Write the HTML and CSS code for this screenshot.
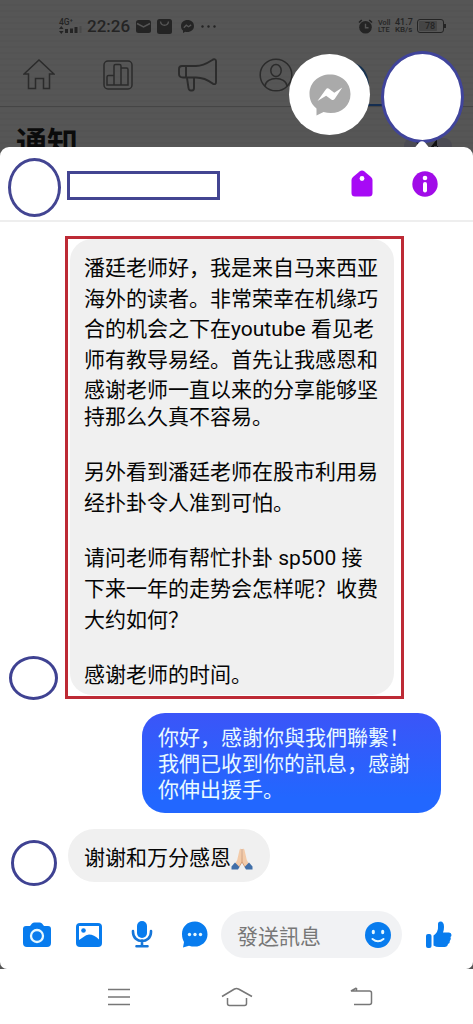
FILE: index.html
```html
<!DOCTYPE html>
<html lang="zh-Hans">
<head>
<meta charset="utf-8">
<title>訊息</title>
<link rel="stylesheet" href="styles.css">
</head>
<body>
<div class="phone">
  <div class="backdrop">
    <div class="status">
      <div class="signal"><span class="net">4G⁺</span>
        <svg width="24" height="8" viewBox="0 0 24 8"><path d="M0 3l2.300-3 2.300 3zM0 5l2.300 3 2.300-3z"/><path d="M6 3h3v4H6zM11 2.500h3V7h-3zM15.500 1h3v6h-3z"/><path d="M20.500 0h2v7h-2z" opacity=".25"/></svg>
      </div>
      <span class="clock">22:26</span>
      <svg class="mail" width="15" height="13" viewBox="0 0 15 13"><rect width="15" height="13" rx="2.500"/><path d="M1 3.500l6.500 3.500L14 3.500" fill="none" stroke="#555" stroke-width="1.500"/></svg>
      <svg class="bag" width="15" height="15" viewBox="0 0 15 15"><rect width="15" height="15" rx="2.500"/><path d="M3.500 2.500c.5 5 7.500 5 8 0" fill="none" stroke="#555" stroke-width="1.400"/></svg>
      <svg class="chat" width="13" height="13" viewBox="0 0 13 13"><path d="M6.500 0C2.700 0 0 2.500 0 6c0 2 .8 3.500 2 4.500V13l2.300-1.200c4.800 1 8.700-1.700 8.700-5.800C13 2.500 10.300 0 6.500 0z"/><path d="M2.800 7.800l2.500-2.600 2.200 1.600 2.700-1.900" fill="none" stroke="#555" stroke-width="1.300"/></svg>
      <svg class="more" width="15" height="3" viewBox="0 0 15 3"><circle cx="1.500" cy="1.500" r="1.200"/><circle cx="7.500" cy="1.500" r="1.200"/><circle cx="13.500" cy="1.500" r="1.200"/></svg>
      <svg class="alarm" width="15" height="15" viewBox="0 0 15 15"><circle cx="7.500" cy="8.300" r="6.300"/><path d="M1 3.500L3.800 1M14 3.500L11.200 1" stroke="#222" stroke-width="1.600"/><path d="M7.500 4.800v4h3" fill="none" stroke="#555" stroke-width="1.400"/></svg>
      <div class="stack volte"><span>Voll</span><span>LTE</span></div>
      <div class="stack speed"><span class="rate">41.7</span><span>KB/s</span></div>
      <div class="battery"><span>78</span></div>
    </div>
    <div class="tabs">
      <svg class="t-home" width="32" height="31" viewBox="0 0 32 31"><path d="M1 15L16 1l15 14h-4.500v14.500h-6V19.500h-8v10h-7V15z"/></svg>
      <svg class="t-chart" width="30" height="30" viewBox="0 0 30 30"><rect x="1" y="1" width="28" height="28" rx="4"/><path d="M4 25V17q0-1.500 1.500-1.500H11V25zM11 25V6q0-1.500 1.500-1.500h4Q18 4.500 18 6v19zM18 8h5.500Q25 8 25 9.500V25h-7"/></svg>
      <svg class="t-horn" width="39" height="34" viewBox="0 0 39 34"><g stroke-width="1.900"><path d="M8 8h10C26 8 31 4 35 1.500q3-.8 3 1.500v21q0 3-3 1.800C30 22 25 19.500 18 19.500H5Q1 19.500 1 16v-5q0-3 3-3zM8 8v11.500"/><path d="M9 20l1.500 10q.3 2.500 2.500 2.500h1q2 0 2-2.500V20"/></g></svg>
      <svg class="t-user" width="34" height="34" viewBox="0 0 34 34"><circle cx="17" cy="17" r="15.800"/><ellipse cx="17" cy="12.500" rx="5.200" ry="6"/><path d="M6 28c1-10 21-10 22 0"/></svg>
      <svg class="t-bell" width="18" height="24" viewBox="0 0 18 24"><path d="M0 0c10 1 16 8 17 22l-4 1C10 13 7 5 0 0z" fill="#173250" stroke="none"/></svg>
    </div>
    <div class="page-title"><h1>通知</h1>
      <svg class="search" width="48" height="16" viewBox="0 0 48 16"><rect width="48" height="16" rx="8" fill="#4b4b53"/><path d="M12 4h8l-3 6zM33 1l-7 9h7zM30 8h4l1 6h-5z" fill="#111"/></svg>
    </div>
    <div class="active-line"></div>
  </div>

  <div class="heads">
    <div class="messenger"><svg width="42" height="42" viewBox="0 0 42 42"><path d="M21 .5C9.500.5.500 8.500.500 20c0 6 2.500 11 7 14.500V41.500l7-3.500C29 42 41.500 34 41.500 20 41.500 8.500 32.500.5 21 .5z" fill="#aaa"/><path d="M8.500 27l8.300-11.500q1.500-2 3.500-.5l5 3.800 8-5.200-7.500 11.200q-1.500 2-3.500.7l-5.200-3.700z" fill="#fff"/></svg></div>
    <div class="person"></div>
    <svg class="pointer" width="20" height="8" viewBox="0 0 20 8"><path d="M1 8Q3 7 5 4l2-2.500q3-2.500 6 0L15 4q2 3 4 4z" fill="#fff"/></svg>
  </div>

  <main class="sheet">
    <header class="contact">
      <div class="face"></div>
      <div class="name"></div>
      <svg class="tag" width="22" height="27" viewBox="0 0 22 27"><path d="M8.500 1.400q2.500-2 5 0L20 7q1.500 1.500 1.500 3v13q0 3.500-3.500 3.500H4Q.500 26.500.500 23V10Q.500 8.500 2 7z" fill="#a70af5"/><circle cx="11" cy="8.500" r="2.400" fill="#fff"/></svg>
      <svg class="info" width="26" height="26" viewBox="0 0 26 26"><circle cx="13" cy="13" r="12.700" fill="#a10ce8"/><circle cx="13" cy="7" r="2.300" fill="#fff"/><path d="M13 13v6.500" stroke="#fff" stroke-width="4" stroke-linecap="round"/></svg>
    </header>

    <section class="thread">
      <div class="row first">
        <div class="ring wide"></div>
        <div class="frame">
          <div class="bubble long">
            <p><span>潘廷老师好，我是来自马来西亚</span><span>海外的读者。非常荣幸在机缘巧</span><span>合的机会之下在youtube 看见老</span><span>师有教导易经。首先让我感恩和</span><span>感谢老师一直以来的分享能够坚</span><span class="tight">持那么久真不容易。</span></p>
            <p><span>另外看到潘廷老师在股市利用易</span><span>经扑卦令人准到可怕。</span></p>
            <p><span>请问老师有帮忙扑卦 sp500 接</span><span>下来一年的走势会怎样呢？收费</span><span>大约如何？</span></p>
            <p><span>感谢老师的时间。</span></p>
          </div>
        </div>
      </div>
      <div class="row reply">
        <div class="bubble mine"><span>你好，感謝你與我們聯繫！</span><span>我們已收到你的訊息，感謝</span><span>你伸出援手。</span></div>
      </div>
      <div class="row last">
        <div class="ring"></div>
        <div class="bubble short"><span>谢谢和万分感恩</span><svg width="22" height="22" viewBox="0 0 22 22"><path d="M10.500 1q-1.500-.8-2 1L6.200 12 4 16l4 3 3-5zM11.500 1q1.500-.8 2 1l2.300 10 2.200 4-4 3-3-5z" fill="#f3cba9"/><path d="M11 1v13M8 19l3-5 3 5" fill="none" stroke="#c98f68" stroke-width=".8"/><path d="M4 14.500L8.500 19 7 21.500H.500v-3zM18 14.500L13.500 19l1.500 2.500h6.500v-3z" fill="#416fa8"/></svg></div>
      </div>
    </section>

    <footer class="composer">
      <svg class="c-cam" width="30" height="26" viewBox="0 0 30 26"><path d="M4 4h4l2-2.500Q11 .5 12.500.5h5Q19 .5 20 1.500L22 4h4q3 0 3 3v14q0 4-4 4H5q-4 0-4-4V7q0-3 3-3z"/><circle cx="15" cy="14" r="6" fill="none" stroke="#e5f8ff" stroke-width="2.300"/></svg>
      <svg class="c-pic" width="28" height="26" viewBox="0 0 28 26"><rect x="1" y="1" width="26" height="24" rx="4"/><path d="M4 4h20v13.500Q19 12.500 14 12.500q-3 0-5.500 2.500L4 18z" fill="#fff"/><circle cx="8.500" cy="8.500" r="2.300"/></svg>
      <svg class="c-mic" width="22" height="27" viewBox="0 0 22 27"><rect x="6" y="0" width="10" height="17" rx="5"/><path d="M2 10v1c0 12 18 12 18 0v-1M11 19.500V25M5.500 25.200h11" fill="none" stroke="#1676d8" stroke-width="2.600" stroke-linecap="round"/></svg>
      <svg class="c-chat" width="27" height="27" viewBox="0 0 27 27"><path d="M14 .5C6 .5 1 6 1 13c0 4 1 6 2 8l-1 5.500 6-1.800C18 28 26.500 22 26.500 13.500 26.500 6 21 .5 14 .5z"/><g fill="#e5f8ff"><circle cx="8.500" cy="13.500" r="1.700"/><circle cx="14" cy="13.500" r="1.700"/><circle cx="19.500" cy="13.500" r="1.700"/></g></svg>
      <div class="field"><span>發送訊息</span><svg width="26" height="26" viewBox="0 0 26 26"><circle cx="13" cy="13" r="13"/><ellipse cx="8.300" cy="10" rx="1.600" ry="2.300" fill="#e5f8ff"/><ellipse cx="17.700" cy="10" rx="1.600" ry="2.300" fill="#e5f8ff"/><path d="M7.500 17q5.500 4.500 11 0" fill="none" stroke="#e5f8ff" stroke-width="2" stroke-linecap="round"/></svg></div>
      <svg class="c-like" width="27" height="28" viewBox="0 0 27 28"><rect x="1" y="13" width="5.500" height="14" rx="2"/><path d="M8.500 14.500q5-3.500 4.500-9V3q0-2.500 2.500-2.500 3.500 0 3.500 5.500 0 3-1 5.500h6q2.500.3 2.500 2.500 0 1.500-1 2 1 2-.7 4 .3 2.500-1.800 3-.5 3-3.500 3H14q-3 0-5.500-1.500z"/></svg>
    </footer>
  </main>

  <nav class="sysnav">
    <svg class="n-menu" width="22" height="18" viewBox="0 0 22 18"><path d="M0 1.500h22M0 9h22M0 16.500h22"/></svg>
    <svg class="n-home" width="32" height="20" viewBox="0 0 32 20"><path d="M1 9.500L13.500 2q2-1.200 4 0L31 9.500M6.500 11v5.500Q6.500 18.500 8.500 18.500h15q2 0 2-2V11"/></svg>
    <svg class="n-back" width="23" height="20" viewBox="0 0 23 20"><path d="M6.500 1L1 4h18.500q2 0 2 2v9.500q0 2-2 2H4M6.500 1v3"/></svg>
  </nav>
</div>
</body>
</html>
```
FILE: styles.css
```css
* { box-sizing: border-box; }
body { margin: 0; background: #fff; font-family: Roboto, "Noto Sans CJK SC", sans-serif; }
svg { display: block; flex: none; }
.phone { position: relative; width: 473px; height: 1024px; display: flex; flex-direction: column; overflow: hidden; background: #555; }

.backdrop { height: 147px; flex: none; position: relative; overflow: hidden; background: repeating-linear-gradient(#565656 0 4px, #545454 4px 6px); }
.status { display: flex; align-items: center; height: 52px; padding-left: 59px; color: #242424; }
.status svg { fill: #242424; }
.signal { width: 24px; font-size: 8.500px; line-height: 8px; font-weight: 500; }
.net { display: block; }
.clock { margin-left: 4px; width: 44px; font-size: 17px; font-weight: 500; }
.mail { margin-left: 5px; }
.bag { margin-left: 6px; }
.chat { margin-left: 9px; }
.more { margin-left: 7px; }
.alarm { margin-left: 142px; }
.stack { display: flex; flex-direction: column; font-weight: 500; line-height: 7.500px; white-space: nowrap; }
.volte { width: 13px; margin-left: 5px; font-size: 7.300px; }
.speed { width: 19px; margin-left: 4px; font-size: 8px; }
.rate { font-size: 9px; }
.battery { width: 27px; height: 14px; margin-left: 3px; border: 1px solid #242424; border-radius: 3px; padding: 1px 6px 1px 1px; line-height: 10px; position: relative; }
.battery::after { content: ""; position: absolute; right: -3px; top: 4px; width: 2px; height: 4px; background: #242424; }
.battery span { display: block; background: #454545; font-size: 9px; font-weight: 500; text-align: center; padding-left: 4px; border-radius: 1px; }
.tabs { display: flex; align-items: center; height: 55px; padding: 0 0 9px 23px; border-bottom: 1px solid #454545; }
.tabs svg { fill: none; stroke: #2b2b2b; stroke-width: 1.500; }
.t-chart { margin-left: 48px; }
.t-horn { margin-left: 45px; }
.t-user { margin-left: 42px; }
.t-bell { margin-left: 59px; }
.page-title { display: flex; justify-content: space-between; padding: 17px 21px 0 16px; }
.page-title h1 { margin: 2px 0 0; font-size: 31px; line-height: 36px; font-weight: 700; color: #0b0b0b; }
.search { margin-top: 14px; }
.active-line { position: absolute; left: 368px; top: 104px; width: 80px; height: 2px; background: #142d50; }

.heads { position: absolute; left: 289px; top: 51px; display: flex; z-index: 2; }
.messenger { width: 81px; height: 81px; margin-top: 3px; border-radius: 50%; background: #fff; display: flex; align-items: center; justify-content: center; }
.person { width: 83px; height: 92px; margin-left: 11px; border: 3px solid #40449b; border-radius: 50%; background: #fff; }
.pointer { position: absolute; left: 123px; top: 90px; }

.sheet { height: 822px; flex: none; display: flex; flex-direction: column; background: #fff; border-radius: 9px 9px 7px 7px; overflow: hidden; }
.contact { height: 75px; flex: none; display: flex; align-items: flex-start; padding-left: 8px; border-bottom: 2px solid #eee; }
.face { width: 53px; height: 59px; margin-top: 11px; border: 3px solid #434592; border-radius: 50%; }
.name { width: 153px; height: 29px; margin: 24px 0 0 6px; border: 3px solid #434592; }
.tag { margin: 23px 0 0 131px; }
.info { margin: 24px 0 0 39px; }

.thread { height: 675px; flex: none; padding-top: 14px; }
.row { display: flex; align-items: flex-end; }
.ring { width: 46px; height: 46px; border: 3px solid #3f4292; border-radius: 50%; flex: none; }
.ring.wide { width: 49px; height: 44px; margin-bottom: -1px; }
.first { height: 463px; padding-left: 9px; }
.frame { width: 339px; height: 463px; margin-left: 7px; border: 3px solid #bd2a35; padding: 0 7px 0 2px; }
.bubble { background: #f0f0f0; color: #050505; font-size: 21px; }
.bubble span { display: block; white-space: nowrap; }
.long { height: 456px; border-radius: 22px; padding: 14px 0 0 14px; line-height: 30.600px; }
.long p { margin: 0 0 24.900px; }
.long .tight { line-height: 22.400px; margin-bottom: 29px; }
.reply { justify-content: flex-end; padding: 14px 32px 0 0; }
.mine { width: 299px; height: 100px; border-radius: 23px; background: linear-gradient(#3b55f8, #2267ff 85%); color: #e9faff; padding: 13px 0 0 16px; line-height: 25.800px; }
.last { padding: 16px 0 0 11px; align-items: flex-end; }
.last .ring { margin-bottom: -4px; }
.short { display: flex; align-items: center; width: 202px; height: 53px; margin-left: 11px; border-radius: 27px; padding: 6px 0 0 16px; line-height: 31px; }

.composer { height: 72px; flex: none; display: flex; align-items: center; padding: 3px 0 0 22px; }
.composer svg { fill: #087cee; }
.c-pic { margin-left: 23px; }
.c-mic { margin-left: 28px; }
.c-chat { margin-left: 28px; }
.field { display: flex; align-items: center; justify-content: space-between; width: 181px; height: 47px; margin-left: 13px; padding: 0 11px 0 16px; border-radius: 24px; background: #f1f2f4; color: #777; font-size: 21px; }
.c-like { margin-left: 23px; }

.sysnav { height: 55px; flex: none; display: flex; align-items: center; padding-left: 108px; background: #fff; }
.sysnav svg { fill: none; stroke: #777; stroke-width: 1.500; }
.n-home { margin-left: 91px; }
.n-back { margin-left: 97px; }
```
